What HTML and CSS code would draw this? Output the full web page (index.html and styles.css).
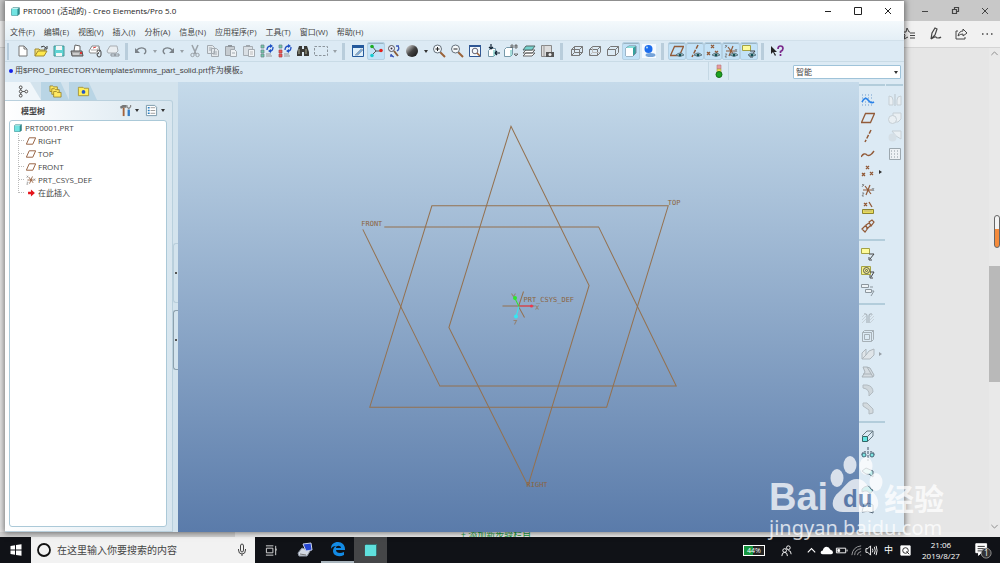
FILE: index.html
```html
<!DOCTYPE html>
<html lang="zh-CN">
<head>
<meta charset="utf-8">
<title>Creo Elements/Pro 5.0</title>
<link rel="stylesheet" href="styles.css">
</head>
<body>
<svg class="sprite" aria-hidden="true">
  <defs>
    <linearGradient id="ball" x1="0" y1="0" x2="1" y2="1"><stop offset=".1" stop-color="#ccc"/><stop offset=".5" stop-color="#444"/><stop offset="1" stop-color="#111"/></linearGradient>
    <symbol id="new" viewBox="0 0 14 14"><path d="M3 2h5l3 3v7H3z" fill="#fff" stroke="#777"/><path d="M8 2v3h3" fill="none" stroke="#777"/></symbol>
    <symbol id="open" viewBox="0 0 14 14"><path d="M1 12V5h4l1 1h5v2" fill="#f5df72" stroke="#a08a30"/><path d="M1 12l3-5h9l-3 5z" fill="#ffe94d" stroke="#a08a30"/><path d="M7 3q3-2 5 1M13 2v3h-3" fill="none" stroke="#333"/></symbol>
    <symbol id="save" viewBox="0 0 14 14"><path d="M2 2h10v10H2z" fill="#5fd3d3" stroke="#4b9292"/><path d="M4 2h6v4H4zM4 9h6v3H4z" fill="#f4f7f7"/></symbol>
    <symbol id="print" viewBox="0 0 14 14"><path d="M4 7l1-6 5 1v6" fill="#fff" stroke="#666"/><path d="M1 7h11l1 5H2z" fill="#aaa" stroke="#555"/><path d="M3 10h6" stroke="#eee"/><path d="M10 9h2" stroke="#d33" stroke-width="2"/></symbol>
    <symbol id="mail" viewBox="0 0 14 14"><path d="M1 7l3-5h7l1 5-2 2H2z" fill="#fff" stroke="#888"/><path d="M3 6h6l2-3" fill="none" stroke="#aaa"/><path d="M9 8q0-2 2-2t2 2v3q0 2-2 2t-2-3l2-1" fill="none" stroke="#444"/><path d="M5 4l3-1" stroke="#d44"/></symbol>
    <symbol id="maillink" viewBox="0 0 14 14"><path d="M1 7l3-5h7l1 5-2 2H2z" fill="#e9edf0" stroke="#a8adb2"/><path d="M5 10h4v2H5zM9 10h4v2H9z" fill="none" stroke="#8c9298"/></symbol>
    <symbol id="undo" viewBox="0 0 14 14"><path d="M2 7q4-5 9-2 2 3-1 5" fill="none" stroke="#7b8288" stroke-width="1.4"/><path d="M1 4v5h5z" fill="#7b8288"/></symbol>
    <symbol id="redo" viewBox="0 0 14 14"><path d="M12 7Q8 2 3 5 1 8 4 10" fill="none" stroke="#7b8288" stroke-width="1.4"/><path d="M13 4v5H8z" fill="#7b8288"/></symbol>
    <symbol id="cut" viewBox="0 0 14 14"><path d="M4 1l4 9M10 1L6 10" stroke="#9aa1a7" stroke-width="1.5"/><circle cx="4.500" cy="11" r="1.700" fill="none" stroke="#9aa1a7"/><circle cx="9.500" cy="11" r="1.700" fill="none" stroke="#9aa1a7"/></symbol>
    <symbol id="copy" viewBox="0 0 14 14"><path d="M1.500 1.500h5l2 2v6h-7zM5.500 4.500h5l2 2v6h-7z" fill="#e4e9ed" stroke="#a3aab0"/><path d="M7 8h4M7 10h4M3 4h3M3 6h2" stroke="#a3aab0"/></symbol>
    <symbol id="paste" viewBox="0 0 14 14"><path d="M1.500 2.500h9v9h-9z" fill="#c6ccd1" stroke="#9aa1a7"/><path d="M4 1h4v2H4z" fill="#8f969c"/><path d="M6.500 5.500h4l2 2v5h-6z" fill="#eef1f3" stroke="#a3aab0"/><path d="M8 9h3" stroke="#a3aab0"/></symbol>
    <symbol id="pastes" viewBox="0 0 14 14"><path d="M1.500 2.500h9v9h-9z" fill="#d9dfe4" stroke="#a6adb3"/><path d="M4 1h4v2H4z" fill="#a0a7ad"/><path d="M6.500 5.500h6v7h-6z" fill="#f3f5f7" stroke="#a3aab0"/><path d="M8 8h3M8 10h3" stroke="#bbb"/></symbol>
    <symbol id="regen" viewBox="0 0 14 14"><path d="M1 1h3v3H1zM1 6h3v3H1zM1 10h3v3H1z" fill="#71c9a9" stroke="#6a8088" stroke-width=".7"/><path d="M7 6q0-4 4-4M13 3q0 4-3 4" fill="none" stroke="#1d4fc4" stroke-width="1.300"/><path d="M10 0l3 2-3 2zM11 5v4L8 7z" fill="#1d4fc4"/><path d="M6 10h5M6 12h6" stroke="#999"/></symbol>
    <symbol id="regenm" viewBox="0 0 14 14"><path d="M1 1h3v3H1z" fill="#71c9a9" stroke="#6a8088" stroke-width=".7"/><path d="M1 6h3v3H1zM1 10h3v3H1z" fill="#e55" stroke="#a44" stroke-width=".7"/><path d="M7 6q0-4 4-4M13 3q0 4-3 4" fill="none" stroke="#1d4fc4" stroke-width="1.300"/><path d="M10 0l3 2-3 2zM11 5v4L8 7z" fill="#1d4fc4"/><path d="M6 10h5M6 12h6" stroke="#999"/></symbol>
    <symbol id="find" viewBox="0 0 14 14"><path d="M3 2h3v3h2V2h3l2 6v4H8V8H6v4H1V8z" fill="#3a3a36"/><path d="M3 5v5M10 5v5" stroke="#aaa98f"/></symbol>
    <symbol id="selbox" viewBox="0 0 14 14"><path d="M.5 2.500h13v9H.5z" fill="none" stroke="#8c959c" stroke-dasharray="2.500 1.500"/></symbol>
    <symbol id="repaint" viewBox="0 0 14 14"><path d="M1.500 1.500h11v11h-11z" fill="#dff0fb" stroke="#24599c"/><path d="M1 1h12v3H1z" fill="#24599c"/><path d="M4 11l6-6 2 1-5 5z" fill="#7da9d4" stroke="#9ab"/></symbol>
    <symbol id="spin" viewBox="0 0 14 14"><path d="M3 2l4 5-4 4M7 7h5" fill="none" stroke="#555"/><circle cx="3" cy="2.500" r="1.800" fill="#1cae22"/><circle cx="12" cy="6.500" r="1.800" fill="#e2201b"/><circle cx="3" cy="11.500" r="1.800" fill="#16cbd0"/></symbol>
    <symbol id="orient" viewBox="0 0 14 14"><circle cx="4.500" cy="4.500" r="3" fill="#eef" stroke="#555"/><circle cx="4.500" cy="4.500" r="1" fill="#333"/><path d="M7 7l4 5" stroke="#8a5d3a" stroke-width="2"/><path d="M9 2h3M11 2q2 3-1 5M4 10q0 2 3 3M3 12h3" fill="none" stroke="#3c57b8" stroke-width="1.300"/></symbol>
    <symbol id="shade" viewBox="0 0 14 14"><circle cx="7" cy="7" r="6" fill="url(#ball)"/></symbol>
    <symbol id="zin" viewBox="0 0 14 14"><path d="M8 8l5 5" stroke="#9a6238" stroke-width="2"/><circle cx="5.500" cy="5" r="4" fill="#f5f9fb" stroke="#65717c"/><path d="M3.500 5h4M5.500 3v4" stroke="#222"/></symbol>
    <symbol id="zout" viewBox="0 0 14 14"><path d="M8 8l5 5" stroke="#9a6238" stroke-width="2"/><circle cx="5.500" cy="5" r="4" fill="#f5f9fb" stroke="#65717c"/><path d="M3.500 5h4" stroke="#222"/></symbol>
    <symbol id="refit" viewBox="0 0 14 14"><path d="M1.500 1.500h11v11h-11z" fill="#f4f9fc" stroke="#2f5794"/><path d="M1 1h12v2H1z" fill="#2f5794"/><circle cx="7" cy="7" r="2.800" fill="none" stroke="#667"/><path d="M9 9l3 3" stroke="#9a6238" stroke-width="1.500"/></symbol>
    <symbol id="reorient" viewBox="0 0 14 14"><path d="M2.500 6.500l2-2h5v6l-2 2h-5z" fill="#fff" stroke="#79a"/><path d="M5 0v5M3 3l2 2 2-2M9 9h5M11 7L9 9l2 2" fill="none" stroke="#123" stroke-width="1.200"/><path d="M8 6v6" stroke="#50bdb5"/></symbol>
    <symbol id="views" viewBox="0 0 14 14"><path d="M.5 5.500l2-2h6v7l-2 2h-6z" fill="#fff" stroke="#79a"/><path d="M7 6v6" stroke="#50bdb5"/><path d="M7 4V1h2v3M7 3h2M11 4V1h2v3zM11 2h2M10 10h4l-2 2z" fill="none" stroke="#555" stroke-width=".8"/></symbol>
    <symbol id="layers" viewBox="0 0 14 14"><path d="M1 12l3-3h9l-3 3zM1 9l3-3h9l-3 3z" fill="#fff" stroke="#666"/><path d="M1 6l3-4h9l-3 4z" fill="#74d2cd" stroke="#566"/></symbol>
    <symbol id="viewmgr" viewBox="0 0 14 14"><path d="M1.500 1.500h10v11h-10z" fill="#ddd" stroke="#888"/><path d="M4 1v11" stroke="#999"/><path d="M6 8h8v5H6z" fill="#555"/><circle cx="10" cy="10.500" r="1.500" fill="#eee"/></symbol>
    <symbol id="wire" viewBox="0 0 14 14"><path d="M1.500 5.500h8v6h-8zM4.500 2.500h8v6h-8zM1.500 5.500l3-3M9.500 5.500l3-3M9.500 11.500l3-3M1.500 11.500l3-3" fill="none" stroke="#777"/></symbol>
    <symbol id="hidden" viewBox="0 0 14 14"><path d="M1.500 5.500h8v6h-8zM1.500 5.500l3-3h8v6l-3 3M9.500 5.500l3-3" fill="none" stroke="#777"/><path d="M4.500 3v5.500h8M4 9l-2 2" fill="none" stroke="#bbb"/></symbol>
    <symbol id="nohidden" viewBox="0 0 14 14"><path d="M1.500 5.500h8v6h-8zM1.500 5.500l3-3h8v6l-3 3M9.500 5.500l3-3" fill="none" stroke="#777"/></symbol>
    <symbol id="cube" viewBox="0 0 14 14"><path d="M1 3l2-2h10v10l-2 2H1z" fill="#2b8e90" stroke="#2a6f74"/><path d="M1 3h9v10H1z" fill="#72e4e2"/><path d="M1 3l2-2h10l-3 2z" fill="#c5f3f1"/></symbol>
    <symbol id="scube" viewBox="0 0 14 14"><path d="M2 4l3-2h7v7l-3 3H2z" fill="#35a29f" stroke="#789"/><path d="M2 4h7v8H2z" fill="#fff"/><path d="M2 4l3-2h7L9 4z" fill="#87dcda"/></symbol>
    <symbol id="blueball" viewBox="0 0 14 14"><path d="M0 0h14v14H0z" fill="#f5faff"/><ellipse cx="8.500" cy="11" rx="5" ry="2" fill="#75a3d9"/><circle cx="6.500" cy="5" r="4" fill="#1c6dee"/><circle cx="5" cy="3.500" r="1" fill="#bde"/></symbol>
    <symbol id="eye" viewBox="0 0 14 14"><path d="M6 11q4-4 8 0-4 3-8 0z" fill="#9bc5c2" stroke="#567" stroke-width=".8"/><circle cx="10" cy="11" r="1.300" fill="#124e55"/></symbol>
    <symbol id="plane" viewBox="0 0 14 14"><path d="M4.500 2.500h9l-4 9h-9z" fill="none" stroke="#925b39" stroke-width="1.300"/></symbol>
    <symbol id="axis" viewBox="0 0 14 14"><path d="M10 1L4 13" stroke="#925b39" stroke-width="1.500" stroke-dasharray="4 1.500"/></symbol>
    <symbol id="pts" viewBox="0 0 14 14"><path d="M5 1l3 3M8 1L5 4M1 8l3 3M4 8l-3 3M9 7l3 3M12 7l-3 3" stroke="#925b39" stroke-width="1.300"/></symbol>
    <symbol id="csys" viewBox="0 0 14 14"><path d="M2 7h9M4 3l6 8M9 2L5 12" stroke="#925b39" stroke-width="1.200"/><path d="M1 1l2 2M3 1L1 4M11 5l2 3M13 5l-2 3M1 10h2l-2 3h2" fill="none" stroke="#777" stroke-width=".8"/></symbol>
    <symbol id="note" viewBox="0 0 14 14"><path d="M.5 1.500h8v5h-8z" fill="#fdfb9c" stroke="#a4a244"/><path d="M8 7h5l-4 5M8 10v3h3" fill="none" stroke="#444"/></symbol>
    <symbol id="help" viewBox="0 0 14 14"><path d="M1 2v8l2-2 2 4 1-1-2-3h3z" fill="#222"/><path d="M8 5q0-3 2.500-3T13 4.500q0 2-2.500 3v1.500M10.500 10v2" fill="none" stroke="#7b2b8c" stroke-width="1.700"/></symbol>
    <symbol id="sketch" viewBox="0 0 14 14"><path d="M1 2h12M1 12h12M1 5h12M1 9h12" stroke="#6c9bce" stroke-dasharray="1 2"/><path d="M1 9q3-6 6-2t6 2" fill="none" stroke="#2a82e8" stroke-width="1.600"/></symbol>
    <symbol id="curve" viewBox="0 0 14 14"><path d="M0 10q3-5 6-2 3 2 7-4" fill="none" stroke="#925b39" stroke-width="1.400"/></symbol>
    <symbol id="ruler" viewBox="0 0 14 14"><path d="M3 2l3 3M6 2L3 5M8 1l3 5" stroke="#925b39" stroke-width="1.300"/><path d="M1.500 8.500h11v4h-11z" fill="#e8dd5a" stroke="#8d8430"/><path d="M4 9v2M6 9v2M8 9v2M10 9v2" stroke="#a99" stroke-width=".6"/></symbol>
    <symbol id="chain" viewBox="0 0 14 14"><path d="M1 10l3-3 3 2-3 4zM5 6l3-2 2 2-4 4zM8 3l3-2 2 2-3 4z" fill="none" stroke="#925b39" stroke-width="1.200"/></symbol>
    <symbol id="notes3" viewBox="0 0 14 14"><path d="M.5 1.500h7v3h-7zM4.500 6.500h6v3h-6z" fill="#eef3f6" stroke="#8d979e"/><path d="M9 4h3M10 8h3l-3 5" fill="none" stroke="#8d979e"/></symbol>
    <symbol id="noteat" viewBox="0 0 14 14"><path d="M.5 1.500h9v8h-9z" fill="#f4f08c" stroke="#a4a244"/><circle cx="5.500" cy="5.500" r="3" fill="none" stroke="#555"/><circle cx="5.500" cy="5.500" r="1" fill="none" stroke="#555"/><path d="M9 7h4l-3 5M9 10v3h3" fill="none" stroke="#444"/></symbol>
    <symbol id="hole" viewBox="0 0 14 14"><path d="M3 3h2q1 0 1 2v7M11 3H9Q8 3 8 5v7" fill="none" stroke="#9da7ae"/><path d="M1 6l3-3M1 9l4-4M1 12l4-4M9 6l3-3M9 9l4-4M9 12l4-4" stroke="#c3ccd2" stroke-width=".8"/></symbol>
    <symbol id="shell" viewBox="0 0 14 14"><path d="M1.500 3.500l2-2h9v9l-2 2h-9zM1.500 3.500h9v9M10.500 3.500l2-2M3.500 5.500h5v5h-5z" fill="none" stroke="#a6b0b6"/></symbol>
    <symbol id="rib" viewBox="0 0 14 14"><path d="M1 12V6l4-4v6zM5 8l3-4 5-2v6l-4 4H1" fill="#dfe5e9" stroke="#aeb7bd"/></symbol>
    <symbol id="draft" viewBox="0 0 14 14"><path d="M2 2h4l6 10H1l3-5zM6 2l3 1 4 7-1 2M2 9h8" fill="#d5dce1" stroke="#aab3b9"/></symbol>
    <symbol id="round" viewBox="0 0 14 14"><path d="M2 2h4q6 1 6 7l-4 4q1-7-6-8z" fill="#cfd7dc" stroke="#b2bbc1"/></symbol>
    <symbol id="chamfer" viewBox="0 0 14 14"><path d="M2 2h4l6 6v4l-4 1V9L2 5z" fill="#d3dade" stroke="#b2bbc1"/></symbol>
    <symbol id="extrude" viewBox="0 0 14 14"><path d="M1.500 7.500h5v5h-5z" fill="#62e5e2" stroke="#366"/><path d="M1 7l5-5h6v5l-5 5M7 7l5-5" fill="none" stroke="#687a84"/></symbol>
    <symbol id="revolve" viewBox="0 0 14 14"><path d="M7 0v14M1 8q0-4 4-3M13 8q0-4-4-3" fill="none" stroke="#456" stroke-dasharray="3 1"/><circle cx="3" cy="8" r="2" fill="#7de6e2" stroke="#467"/><circle cx="11" cy="8" r="2" fill="#7de6e2" stroke="#467"/></symbol>
    <symbol id="sweep" viewBox="0 0 14 14"><path d="M1 6l4-3 7 3v6l-4-3H5z" fill="#bcecea" stroke="#567"/></symbol>
    <symbol id="blend" viewBox="0 0 14 14"><path d="M1 6q6-6 9 0l2 1-3 4q-2-5-8-2z" fill="#56c8c8" stroke="#567"/></symbol>
    <symbol id="bound" viewBox="0 0 14 14"><path d="M1 11l2-8q5-2 9 1v8q-5-3-11-1z" fill="#e5f6f8" stroke="#567"/></symbol>
    <symbol id="mirror" viewBox="0 0 14 14"><path d="M7 1v12" stroke="#b9c3c9"/><path d="M1 3q4 0 4 4v5H1zM13 3Q9 3 9 7v5h4z" fill="#e9eff3" stroke="#c6cfd5"/></symbol>
    <symbol id="merge" viewBox="0 0 14 14"><path d="M5 2h8v6l-3 3H5z" fill="#e9eff3" stroke="#c6cfd5"/><circle cx="4.500" cy="8.500" r="4" fill="#e9eff3" stroke="#c6cfd5"/></symbol>
    <symbol id="trim" viewBox="0 0 14 14"><path d="M4 2h9v8L8 7z" fill="#e9eff3" stroke="#c6cfd5"/><circle cx="4.500" cy="8.500" r="4" fill="#d5dfe6"/></symbol>
    <symbol id="grid" viewBox="0 0 14 14"><path d="M1.500 1.500h11v11h-11z" fill="#eef2f5" stroke="#9da8af"/><path d="M3 4h8M3 7h8M3 10h8" stroke="#8d989f" stroke-dasharray="1 2"/></symbol>
    <symbol id="treeic" viewBox="0 0 14 14"><path d="M4 3v8M5 7h4" stroke="#555"/><g fill="#fff" stroke="#444"><circle cx="4" cy="2.500" r="1.500"/><circle cx="4" cy="7" r="1.500"/><circle cx="4" cy="11.500" r="1.500"/><circle cx="10" cy="7" r="1.500"/></g></symbol>
    <symbol id="folders" viewBox="0 0 14 14"><g fill="#ffe963" stroke="#8f7a1f" stroke-width=".8"><path d="M1 1h3l1 1h4v5H1z"/><path d="M3 4h3l1 1h4v5H3z"/><path d="M5 7h3l1 1h4v5H5z"/></g></symbol>
    <symbol id="fav" viewBox="0 0 14 14"><path d="M1.500 3.500v-1h5l1 1h5v8h-11z" fill="#ffee5b" stroke="#a6953a"/><circle cx="7" cy="7.500" r="2" fill="#2457c9"/></symbol>
    <symbol id="hammer" viewBox="0 0 14 14"><path d="M1 3l3-2h4v3H5L2 5z" fill="#777"/><path d="M5 4v9" stroke="#a4623a" stroke-width="2"/><path d="M10.500 6v7" stroke="#337bc4" stroke-width="2.500"/><path d="M8.500 1v2l2 2 2-2V1" fill="none" stroke="#888" stroke-width="1.300"/></symbol>
    <symbol id="list" viewBox="0 0 14 14"><path d="M1.500 1.500h9l2 2v9h-11z" fill="#fff" stroke="#7896a8"/><path d="M3 4h2M3 7h2M3 10h2" stroke="#247cc0" stroke-width="1.500"/><path d="M6 4h5M6 7h5M6 10h5" stroke="#999"/></symbol>
    <symbol id="insert" viewBox="0 0 14 14"><path d="M1 5h5V1l7 6-7 6V9H1z" fill="#e5141b"/></symbol>
    <symbol id="min" viewBox="0 0 14 14"><path d="M4 7.500h6" stroke="currentColor"/></symbol>
    <symbol id="max" viewBox="0 0 14 14"><path d="M3.500 3.500h7v7h-7z" fill="none" stroke="currentColor"/></symbol>
    <symbol id="restore" viewBox="0 0 14 14"><path d="M4.500 5.500h4v4h-4zM6.500 5V3.500h4v4H9" fill="none" stroke="currentColor" stroke-width="1.200"/></symbol>
    <symbol id="close" viewBox="0 0 14 14"><path d="M4 4l6 6M10 4l-6 6" stroke="currentColor"/></symbol>
    <symbol id="up" viewBox="0 0 14 14"><path d="M3 9l4-4 4 4" fill="none" stroke="currentColor" stroke-width="1.200"/></symbol>
    <symbol id="down" viewBox="0 0 14 14"><path d="M3 5l4 4 4-4" fill="none" stroke="currentColor" stroke-width="1.200"/></symbol>
  </defs>
</svg>

<main class="desktop">
  <section class="browser" aria-label="Microsoft Edge">
    <div class="browser-caption">
      <button aria-label="最小化"><svg><use href="#min"/></svg></button>
      <button aria-label="还原"><svg><use href="#restore"/></svg></button>
      <button aria-label="关闭"><svg><use href="#close"/></svg></button>
    </div>
    <div class="browser-tools">
      <button aria-label="收藏夹"><svg viewBox="0 0 14 14"><path d="M8 5H7L5 1 4 5H0l3 3-1 4 4-2M8 6h5M8 8.500h5M8 11h5" fill="none" stroke="currentColor"/></svg></button>
      <button aria-label="笔记"><svg viewBox="0 0 14 14"><path d="M3 12l1-6 3-5 2 1-2 6-4 4q5-3 5-2t2 1 3-1" fill="none" stroke="currentColor" stroke-width="1.200"/></svg></button>
      <button aria-label="分享"><svg viewBox="0 0 14 14"><path d="M4 4H2v8h9v-2M4 9q1-5 5-5V2l4 4-4 3V7Q6 7 4 9z" fill="none" stroke="currentColor"/></svg></button>
      <button aria-label="更多"><svg viewBox="0 0 14 14"><path d="M2 7h1.500M6.500 7H8M11 7h1.500" stroke="currentColor" stroke-width="1.500"/></svg></button>
    </div>
    <div class="browser-page">
      <div class="scrollbar"><svg><use href="#up"/></svg><span class="thumb"></span><svg><use href="#down"/></svg></div>
      <span class="gauge"></span>
    </div>
    <div class="page-foot"><span class="foot-link">+ 添加新步骤栏目</span></div>
  </section>

  <section class="creo" aria-label="Creo Elements/Pro">
    <header class="titlebar">
      <svg><use href="#cube"/></svg>
      <h1>PRT0001 (活动的) - Creo Elements/Pro 5.0</h1>
      <button aria-label="最小化"><svg><use href="#min"/></svg></button>
      <button aria-label="最大化"><svg><use href="#max"/></svg></button>
      <button aria-label="关闭"><svg><use href="#close"/></svg></button>
    </header>
    <nav class="menubar">
      <button>文件(F)</button><button>编辑(E)</button><button>视图(V)</button><button>插入(I)</button><button>分析(A)</button><button>信息(N)</button><button>应用程序(P)</button><button>工具(T)</button><button>窗口(W)</button><button>帮助(H)</button>
    </nav>
    <div class="toolbar">
      <button aria-label="新建"><svg><use href="#new"/></svg></button>
      <button aria-label="打开"><svg><use href="#open"/></svg></button>
      <button aria-label="保存"><svg><use href="#save"/></svg></button>
      <button aria-label="打印"><svg><use href="#print"/></svg></button>
      <button aria-label="发送邮件"><svg><use href="#mail"/></svg></button>
      <button aria-label="发送链接"><svg><use href="#maillink"/></svg></button>
      <span class="sep"></span>
      <button aria-label="撤消"><svg><use href="#undo"/></svg></button><i class="caret dim"></i>
      <button aria-label="重做"><svg><use href="#redo"/></svg></button><i class="caret dim"></i>
      <button aria-label="剪切"><svg><use href="#cut"/></svg></button>
      <button aria-label="复制"><svg><use href="#copy"/></svg></button>
      <button aria-label="粘贴"><svg><use href="#paste"/></svg></button>
      <button aria-label="选择性粘贴"><svg><use href="#pastes"/></svg></button>
      <button aria-label="再生"><svg><use href="#regen"/></svg></button>
      <button aria-label="再生管理器"><svg><use href="#regenm"/></svg></button>
      <button aria-label="查找"><svg><use href="#find"/></svg></button>
      <button aria-label="框选"><svg><use href="#selbox"/></svg></button><i class="caret dim"></i>
      <span class="sep"></span>
      <button aria-label="重画"><svg><use href="#repaint"/></svg></button>
      <button aria-label="旋转中心" class="on"><svg><use href="#spin"/></svg></button>
      <button aria-label="定向模式"><svg><use href="#orient"/></svg></button>
      <button aria-label="外观库"><svg><use href="#shade"/></svg></button><i class="caret"></i>
      <button aria-label="放大"><svg><use href="#zin"/></svg></button>
      <button aria-label="缩小"><svg><use href="#zout"/></svg></button>
      <button aria-label="重新调整"><svg><use href="#refit"/></svg></button>
      <button aria-label="重定向"><svg><use href="#reorient"/></svg></button>
      <button aria-label="视图列表"><svg><use href="#views"/></svg></button>
      <button aria-label="层"><svg><use href="#layers"/></svg></button>
      <button aria-label="视图管理器"><svg><use href="#viewmgr"/></svg></button>
      <span class="sep wide"></span>
      <button aria-label="线框"><svg><use href="#wire"/></svg></button>
      <button aria-label="隐藏线"><svg><use href="#hidden"/></svg></button>
      <button aria-label="消隐"><svg><use href="#nohidden"/></svg></button>
      <button aria-label="着色" class="on"><svg><use href="#scube"/></svg></button>
      <button aria-label="增强的真实感"><svg><use href="#blueball"/></svg></button>
      <span class="sep"></span>
      <button aria-label="平面显示" class="on"><svg><use href="#plane"/><use href="#eye"/></svg></button>
      <button aria-label="轴显示" class="on"><svg><use href="#axis"/><use href="#eye"/></svg></button>
      <button aria-label="点显示" class="on"><svg><use href="#pts"/><use href="#eye"/></svg></button>
      <button aria-label="坐标系显示" class="on"><svg><use href="#csys"/><use href="#eye"/></svg></button>
      <button aria-label="注释显示" class="on"><svg><use href="#note"/><use href="#eye"/></svg></button>
      <span class="sep"></span>
      <button aria-label="上下文帮助"><svg><use href="#help"/></svg></button>
    </div>
    <div class="messages">
      <p>用$PRO_DIRECTORY\templates\mmns_part_solid.prt作为模板。</p>
      <div class="signal"><svg viewBox="0 0 10 14"><path d="M3 1h4v4H3z" fill="#e79aa0" stroke="#b77" stroke-width=".6"/><path d="M3 5h4v4H3z" fill="#eee05c" stroke="#a95" stroke-width=".6"/><circle cx="5" cy="10.500" r="3" fill="#1da321" stroke="#176d1a"/></svg></div>
      <div class="filter"><select aria-label="选取过滤器"><option>智能</option></select><i class="caret"></i></div>
    </div>
    <div class="work">
      <aside class="navigator">
        <div class="tabs">
          <button class="current" aria-label="模型树"><svg><use href="#treeic"/></svg></button>
          <button aria-label="文件夹浏览器"><svg><use href="#folders"/></svg></button>
          <button aria-label="收藏夹"><svg><use href="#fav"/></svg></button>
        </div>
        <div class="pane">
          <div class="pane-head">
            <h2>模型树</h2>
            <button aria-label="设置"><svg><use href="#hammer"/></svg><i class="caret"></i></button>
            <button aria-label="显示"><svg><use href="#list"/></svg><i class="caret"></i></button>
          </div>
          <div class="tree">
            <p><svg><use href="#cube"/></svg>PRT0001.PRT</p>
            <ul>
              <li><svg><use href="#plane"/></svg>RIGHT</li>
              <li><svg><use href="#plane"/></svg>TOP</li>
              <li><svg><use href="#plane"/></svg>FRONT</li>
              <li><svg><use href="#csys"/></svg>PRT_CSYS_DEF</li>
              <li><svg class="arrow"><use href="#insert"/></svg>在此插入</li>
            </ul>
          </div>
        </div>
        <div class="grip grip-soft"></div>
        <div class="grip"></div>
      </aside>
      <div class="viewport">
        <svg viewBox="178 83 680 449" role="img" aria-label="基准平面">
          <g class="datum">
            <path d="M510.500 127L588.500 286 527.500 486 448.500 328z"/>
            <path d="M431.500 206.500H667.500L606 407.500H369.500z"/>
            <path d="M384 227.500H598L675.500 386.500H439.500L362.500 230"/>
            <path d="M502 306.500H534M523 292L518 307 524 318"/>
            <path class="thin" d="M535 306l3 4M538 306l-3 4M511 294l2 3 2-3M513 321h3l-2 4"/>
          </g>
          <path d="M518 306.500H531" stroke="#f0344c"/><circle cx="531" cy="306.500" r="1.500" fill="#f0344c"/>
          <path d="M518.500 307L514.500 299" stroke="#2ee62e"/><circle cx="514.500" cy="298.500" r="2" fill="#2ee62e"/>
          <path d="M518.500 307L515.500 317" stroke="#35e8f2"/><circle cx="515.500" cy="317" r="2" fill="#35e8f2"/>
          <g class="labels">
            <text x="361" y="227">FRONT</text><text x="667" y="206">TOP</text><text x="523" y="303">PRT_CSYS_DEF</text><text x="526" y="487">RIGHT</text>
          </g>
        </svg>
      </div>
      <aside class="features">
        <div class="col main-col">
          <hr>
          <button aria-label="草绘"><svg><use href="#sketch"/></svg></button>
          <button aria-label="平面"><svg><use href="#plane"/></svg></button>
          <button aria-label="轴"><svg><use href="#axis"/></svg></button>
          <button aria-label="曲线"><svg><use href="#curve"/></svg></button>
          <button aria-label="点"><svg><use href="#pts"/></svg><i class="side"></i></button>
          <button aria-label="坐标系"><svg><use href="#csys"/></svg></button>
          <button aria-label="分析"><svg><use href="#ruler"/></svg></button>
          <button aria-label="参照"><svg><use href="#chain"/></svg></button>
          <hr>
          <button aria-label="注释"><svg><use href="#note"/></svg></button>
          <button aria-label="注释特征"><svg><use href="#noteat"/></svg></button>
          <button aria-label="传播"><svg><use href="#notes3"/></svg></button>
          <hr>
          <button aria-label="孔"><svg><use href="#hole"/></svg></button>
          <button aria-label="壳"><svg><use href="#shell"/></svg></button>
          <button aria-label="筋"><svg><use href="#rib"/></svg><i class="side dim"></i></button>
          <button aria-label="拔模"><svg><use href="#draft"/></svg></button>
          <button aria-label="倒圆角"><svg><use href="#round"/></svg></button>
          <button aria-label="倒角"><svg><use href="#chamfer"/></svg></button>
          <hr>
          <button aria-label="拉伸"><svg><use href="#extrude"/></svg></button>
          <button aria-label="旋转"><svg><use href="#revolve"/></svg></button>
          <button aria-label="可变截面扫描"><svg><use href="#sweep"/></svg></button>
          <button aria-label="混合"><svg><use href="#blend"/></svg></button>
          <button aria-label="边界混合"><svg><use href="#bound"/></svg></button>
        </div>
        <div class="col">
          <hr>
          <button aria-label="镜像"><svg><use href="#mirror"/></svg></button>
          <button aria-label="合并"><svg><use href="#merge"/></svg></button>
          <button aria-label="修剪"><svg><use href="#trim"/></svg></button>
          <button aria-label="阵列"><svg><use href="#grid"/></svg></button>
        </div>
      </aside>
    </div>
  </section>
</main>

<footer class="taskbar">
  <button class="start" aria-label="开始"><svg viewBox="0 0 14 14"><path d="M1.500 3l4.500-.7v4.200H1.500zM7 2.100l5.500-.8v5.200H7zM1.500 7.500H6v4.200L1.500 11zM7 7.500h5.500v5.200L7 11.900z" fill="#fff"/></svg></button>
  <label class="search">
    <svg viewBox="0 0 16 16"><circle cx="8" cy="8" r="6" fill="none" stroke="#111" stroke-width="1.800"/></svg>
    <input type="text" placeholder="在这里输入你要搜索的内容">
    <svg class="mic" viewBox="0 0 14 14"><path d="M5.500 3q0-2 1.500-2t1.500 2v4q0 2-1.500 2T5.500 7zM3.500 6v1q0 4 3.500 4t3.500-4V6M7 11v2" fill="none" stroke="#444"/></svg>
  </label>
  <button class="app small" aria-label="任务视图"><svg viewBox="0 0 14 14"><path d="M1.500 4.500h7v5h-7zM1 2h8M1 12h8M11.500 2v10M12 5v2" fill="none" stroke="#ddd"/></svg></button>
  <button class="app" aria-label="远程"><svg viewBox="0 0 16 16"><path d="M1 11l4-5 8 3-3 5-8 0z" fill="#d3d9e3" stroke="#8e96a4"/><path d="M6 2l8-1 1 7-6 1z" fill="#2646d3" stroke="#cbd5ee"/><path d="M3 12l6 1" stroke="#777"/></svg></button>
  <button class="app open" aria-label="Microsoft Edge"><svg viewBox="0 0 16 16"><path d="M1 8C1 3 4 1 8 1s7 3 7 7v1H6c0 3 4 4 8 2v3C8 17 3 14 3 10c0-3 2-5 4-5-4 0-5 1-6 3zm5-1h5c0-3-5-3-5 0z" fill="#138be5"/></svg></button>
  <button class="app small active" aria-label="Creo"><svg viewBox="0 0 14 14"><path d="M1 1h12v12H1z" fill="#5fe0dd"/><path d="M2 1l1-1h11v11l-1 1" fill="none" stroke="#299"/></svg></button>
  <div class="tray">
    <span class="battery">44%</span>
    <svg class="people" viewBox="0 0 14 14"><circle cx="9" cy="4" r="2"/><circle cx="5" cy="7" r="2"/><path d="M2 13q0-4 3-4t3 4M9 7q3 0 3 4"/></svg>
    <svg><use href="#up"/></svg>
    <svg viewBox="0 0 14 14"><path d="M3 11Q0 11 1 8q1-1 2-1 1-4 4-4 3 0 4 3 3 1 3 3t-2 2z" fill="#fff" stroke="none"/></svg>
    <svg viewBox="0 0 14 14"><path d="M1.500 4.500h10v5h-10zM13 6v2"/><path d="M3 6h2v2H3z" fill="#fff"/></svg>
    <svg class="wifi" viewBox="0 0 14 14"><path d="M2 12Q3 3 12 2M5 12q0-6 7-7M8 12q0-3 4-4M11 12h1"/></svg>
    <svg viewBox="0 0 14 14"><path d="M1 5h2l3-3v10L3 9H1zM8 5q1 2 0 4M10 3q2 4 0 8M12 2q2 5 0 10"/></svg>
    <span class="ime">中</span>
    <svg viewBox="0 0 14 14"><path d="M2 2h10v10H2z" fill="#fff"/><circle class="dark" cx="7" cy="7" r="3"/><path class="dark" d="M8 8l3 3"/></svg>
    <time>21:06<br>2019/8/27</time>
    <svg class="bell" viewBox="0 0 20 20"><path d="M2 3h12v10H8l-3 3v-3H2z" fill="#fff"/><path class="dark" d="M4 6h8M4 8.500h8M4 11h5"/><circle class="badge" cx="13.500" cy="13.500" r="5.500"/><text x="11" y="17">1</text></svg>
  </div>
</footer>

<div class="watermark" aria-hidden="true">
  <div class="brand">
    <span class="bai">Bai</span>
    <span class="paw"><svg viewBox="0 0 54 60"><ellipse cx="7" cy="25" rx="6.500" ry="9"/><ellipse cx="20" cy="12" rx="6.500" ry="9"/><ellipse cx="36" cy="13" rx="6.500" ry="9"/><ellipse cx="46" cy="29" rx="6.500" ry="9"/><path d="M27 26c8 0 11 8 16 13 8 8 7 20-4 20H13C0 59 0 46 9 39c6-5 9-13 18-13z"/></svg><b>du</b></span>
    <span class="jy">经验</span>
  </div>
  <div class="site">jingyan.baidu.com</div>
</div>
</body>
</html>
```

FILE: styles.css
```css
* { box-sizing: border-box; }
html, body { height: 100%; }
body {
  margin: 0;
  display: flex;
  flex-direction: column;
  overflow: hidden;
  position: relative;
  font: 8px/12px "Open Sans", "Noto Sans CJK SC", sans-serif;
  color: #444;
}
h1, h2, p, ul { margin: 0; padding: 0; font: inherit; list-style: none; }
button { margin: 0; padding: 0; border: 0; background: none; font: inherit; color: inherit; display: flex; align-items: center; justify-content: center; flex: none; }
svg { width: 14px; height: 14px; flex: none; display: block; }
.sprite { position: absolute; width: 0; height: 0; }

/* Desktop with the browser behind the modelling window */
.desktop { flex: 1; min-height: 0; position: relative; }
.browser { height: 100%; display: flex; flex-direction: column; background: #e6e6e6; }
.browser-caption { height: 21px; background: #c8c8c8; display: flex; justify-content: flex-end; align-items: center; gap: 16px; padding-right: 8px; }
.browser-tools { height: 27px; background: #f1f1f1; border-bottom: 1px solid #d4d4d4; display: flex; justify-content: flex-end; align-items: center; gap: 12px; padding-right: 6px; }
.browser-page { flex: 1; position: relative; display: flex; justify-content: flex-end; min-height: 0; }
.scrollbar { width: 11px; background: #e9e9e9; color: #888; display: flex; flex-direction: column; align-items: center; }
.scrollbar svg { width: 11px; height: 11px; }
.thumb { width: 100%; height: 24%; margin: 207px 0 auto; background: #b9b9b9; }
.gauge { position: absolute; right: 0; top: 167px; width: 6px; height: 33px; border: 1px solid #666; border-radius: 3px; background: linear-gradient(#f3f3f3 42%, #f58b3c 42%); }
.page-foot { height: 5px; overflow: hidden; background: linear-gradient(90deg, #d2d2d2 235px, #e9e9e9 235px); display: flex; justify-content: center; }
.foot-link { color: #1a9c3c; line-height: 6px; font-size: 9px; margin-right: 8px; }

.creo { position: absolute; left: 5px; right: 96px; top: 1px; bottom: 5px; display: flex; flex-direction: column; background: #dceaf4; box-shadow: 0 0 6px 1px rgba(0,0,0,.5); }
.titlebar { height: 20px; background: #fff; display: flex; align-items: center; gap: 16px; padding: 0 9px 0 6px; color: #222; }
.titlebar > svg { width: 9px; height: 9px; margin-right: -14px; }
.titlebar h1 { flex: 1; padding-left: 1px; }
.menubar { height: 20px; display: flex; align-items: center; gap: 9px; padding: 2px 0 0 5px; background: linear-gradient(#f4f9fc, #e4eff6); border-bottom: 1px solid #d1e0ea; }
.toolbar { height: 21px; display: flex; align-items: center; padding-left: 9px; border-bottom: 1px solid #c9dbe6; }
.toolbar::before { content: ""; width: 2px; height: 17px; margin-left: -7px; margin-right: 5px; background: #b6cbdb; }
.toolbar button { width: 18px; height: 18px; }
.toolbar .on { background: #c3e2f7; border: 1px solid #b5d0e2; border-radius: 2px; box-shadow: inset 0 1px #9cb4c3; }
.sep { width: 3px; height: 17px; margin: 0 4px 0 3px; background: #b9cddb; }
.sep.wide { margin: 0 5px 0 4px; }
.caret { width: 9px; flex: none; display: flex; justify-content: center; }
.caret::before { content: ""; border: 2px solid transparent; border-top: 3px solid #333; border-bottom: 0; }
.dim { opacity: .4; }
.messages { height: 20px; display: flex; align-items: center; padding: 0 3px 2px 4px; }
.messages p { flex: 1; padding-left: 6px; position: relative; font-family: "Liberation Sans", "Noto Sans CJK SC", sans-serif; }
.messages p::before { content: ""; position: absolute; left: 0; top: 4px; width: 4px; height: 4px; border-radius: 50%; background: #1520e8; }
.signal { width: 21px; align-self: stretch; border: solid #c5d8e4; border-width: 0 1px; margin-right: 64px; display: flex; align-items: center; justify-content: center; }
.filter { width: 108px; height: 14px; display: flex; align-items: center; background: #fff; border: 1px solid #9fc3d9; border-radius: 1px; margin-top: 2px; }
.filter select { flex: 1; appearance: none; border: 0; background: none; padding: 0 2px; font: inherit; color: inherit; }

.work { flex: 1; min-height: 0; display: flex; }
.navigator { width: 173px; flex: none; display: flex; flex-direction: column; position: relative; background: #d3e3ed; padding-right: 5px; }
.tabs { height: 18px; display: flex; }
.tabs button { width: 28px; height: 18px; background: #b9d5e5; clip-path: polygon(0 0, 70% 0, 100% 100%, 0 100%); }
.tabs .current { width: 36px; background: #f0f6fa; }
.tabs button svg { width: 13px; height: 13px; }
.pane { flex: 1; min-height: 0; display: flex; flex-direction: column; border: 1px solid #b9d0dd; border-left: 0; border-radius: 0 3px 0 0; background: linear-gradient(90deg, #fff, #d8e6ef); padding: 0 5px 4px 4px; }
.pane-head { height: 19px; display: flex; align-items: center; gap: 4px; }
.pane-head h2 { flex: 1; padding-left: 12px; font-weight: 700; }
.pane-head svg { width: 13px; height: 13px; }
.pane-head button { width: 22px; }
.tree { flex: 1; background: #fff; border: 1px solid #abc9d8; border-radius: 3px; line-height: 13px; }
.tree p { display: flex; align-items: center; gap: 3px; padding-left: 4px; }
.tree p svg { width: 8px; height: 8px; }
.tree svg { width: 10px; height: 10px; }
.tree ul { margin-left: 8px; border-left: 1px dotted #bbb; height: 59px; }
.tree li { display: flex; align-items: center; gap: 2px; height: 13px; }
.tree li::before { content: ""; width: 5px; border-top: 1px dotted #bbb; }
.tree .arrow { width: 9px; height: 8px; margin-left: 1px; }
.grip { position: absolute; right: 0; top: 228px; width: 5px; height: 60px; border: 1px solid #8da1ae; border-right: 0; border-radius: 3px 0 0 3px; display: flex; align-items: center; justify-content: center; }
.grip-soft { top: 161px; border-color: #b9cedb; }
.grip::before { content: ""; width: 2px; height: 2px; background: #555; }

.viewport { flex: 1; min-width: 0; background: linear-gradient(#c5daea, #5a7baa); }
.viewport svg { width: 100%; height: 100%; }
.datum path { fill: none; stroke: #94714f; stroke-width: 1; }
.datum .thin { stroke-width: 1; opacity: .7; }
.labels text { font: 7px "DejaVu Sans Mono", monospace; fill: #8b6440; }

.features { width: 45px; flex: none; display: flex; overflow: hidden; gap: 1px; }
.col { width: 17px; }
.main-col { width: 26px; }
.col hr { height: 2px; margin: 4px 0; border: 0; background: #b3cddb; }
.col hr:first-child { margin: 2px 0 5px; }
.col button { width: 18px; height: 18px; position: relative; }
.side { position: absolute; left: 20px; top: 7px; border: 2px solid transparent; border-left: 3px solid #333; border-right: 0; }

/* Taskbar */
.taskbar { height: 26px; flex: none; display: flex; align-items: center; background: #101217; color: #fff; }
.start { width: 31px; height: 26px; }
.search { width: 224px; height: 26px; background: #f2f2f2; display: flex; align-items: center; gap: 5px; padding: 0 6px 0 5px; }
.search svg { width: 16px; height: 16px; }
.search .mic { width: 14px; height: 14px; }
.search input { flex: 1; min-width: 0; border: 0; padding: 0; background: none; font: inherit; font-size: 10px; }
.search input::placeholder { color: #444; opacity: 1; }
.app { width: 33px; height: 26px; }
.app svg { width: 16px; height: 16px; }
.app.small svg { width: 13px; height: 13px; }
.open { border-bottom: 2px solid #a9b5bd; }
.active { background: #454648; }
.tray { margin-left: auto; display: flex; align-items: center; gap: 2px; padding-right: 8px; }
.tray svg { fill: none; stroke: #fff; color: #fff; stroke-width: 1; width: 13px; height: 13px; }
.tray .dark { stroke: #222; }
.tray .badge { fill: #333; stroke: #999; }
.battery { width: 22px; height: 11px; border: 1px solid #fff; background: linear-gradient(90deg, #16953f 44%, #222 44%); font-size: 7px; line-height: 9px; text-align: center; margin-right: 13px; }
.tray .people { margin-right: 10px; }
.tray .wifi { opacity: .6; }
.ime { width: 17px; text-align: center; font-size: 9px; }
.tray time { width: 54px; text-align: center; line-height: 11px; }
.tray .bell { width: 18px; height: 18px; margin-left: 4px; }
.bell text { font: 9px "Open Sans", sans-serif; fill: #fff; stroke: none; }

.watermark { position: absolute; right: 51px; bottom: 22px; width: 180px; color: #fff; opacity: .75; }
.brand { display: flex; align-items: flex-end; height: 60px; padding-bottom: 2px; }
.bai { font: 700 38px/32px "Liberation Sans", sans-serif; width: 61px; }
.paw { width: 54px; position: relative; }
.paw svg { width: 54px; height: 60px; fill: #fff; }
.paw b { position: absolute; left: 13px; bottom: 0; font: 700 24px/28px "Liberation Sans", sans-serif; color: #5877a6; }
.jy { font: 700 30px/32px "Noto Sans CJK SC", sans-serif; }
.site { font: 20px/26px "Noto Sans", sans-serif; }
```
